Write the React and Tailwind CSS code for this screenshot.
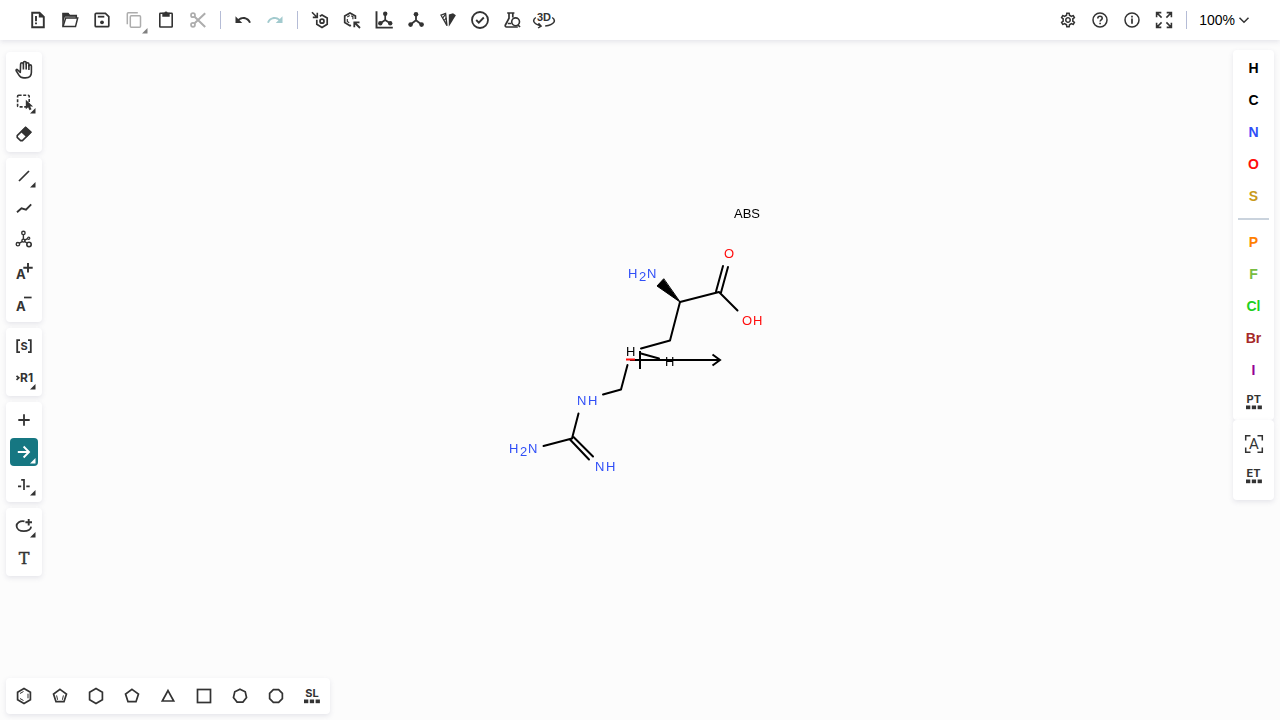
import React from "react";
import { MdOutlineSettings, MdUndo, MdRedo } from "react-icons/md";

function Icon({ children, className = "" }) {
  return (
    <svg
      viewBox="0 0 24 24"
      className={`size-6 ${className}`}
      fill="none"
      stroke="currentColor"
      strokeWidth="1.7"
      aria-hidden="true"
    >
      {children}
    </svg>
  );
}

function Glyph({ x, y, size = 14, font = "Inter, sans-serif", weight = 700, children }) {
  return (
    <text x={x} y={y} fontSize={size} fontFamily={font} fontWeight={weight} fill="currentColor" stroke="none">
      {children}
    </text>
  );
}

function Corner({ className = "" }) {
  return (
    <svg viewBox="0 0 6 6" className={`absolute right-0.5 bottom-0.5 size-1.5 ${className}`} aria-hidden="true">
      <path d="M5.500 0V5.500H0Z" fill="currentColor" />
    </svg>
  );
}

function ToolButton({ label, menu, active, wide, disabled, tone = "text-[#333333]", children }) {
  return (
    <button
      type="button"
      aria-label={label}
      title={label}
      disabled={disabled}
      className={`relative flex shrink-0 items-center justify-center rounded ${wide ? "size-8" : "size-7"} ${
        active ? "bg-[#167782] text-white" : tone
      }`}
    >
      {children}
      {menu && <Corner className={disabled ? "text-[#808080]" : ""} />}
    </button>
  );
}

function Divider() {
  return <div className="mx-1.5 h-[18px] w-px bg-[#b5bcd6]" />;
}

function Panel({ className = "", children }) {
  return (
    <div className={`flex rounded bg-white p-1 shadow-[0_2px_5px_rgba(103,104,132,0.15)] ${className}`}>{children}</div>
  );
}

function polygon(n, r, cx = 12, cy = 12, start = -90) {
  return Array.from({ length: n }, (_, i) => {
    const a = ((start + (360 / n) * i) * Math.PI) / 180;
    return `${(cx + r * Math.cos(a)).toFixed(2)},${(cy + r * Math.sin(a)).toFixed(2)}`;
  }).join(" ");
}

function Squares() {
  return (
    <g fill="currentColor" stroke="none">
      <rect x="4" y="15.500" width="4.300" height="3.700" />
      <rect x="9.800" y="15.500" width="4.300" height="3.700" />
      <rect x="15.600" y="15.500" width="4.300" height="3.700" />
    </g>
  );
}

function TopBar() {
  return (
    <header className="relative z-10 flex h-10 items-center bg-white pr-7 pl-[22px] shadow-[0_2px_5px_rgba(103,104,132,0.15)]">
      <ToolButton wide label="Clear Canvas">
        <Icon>
          <path d="M6.2 4.7h7.3l4.3 4.3v10.3H6.2z" strokeWidth="1.9" />
          <path d="M12.8 4.4v5.2h5.2z" fill="currentColor" stroke="none" />
          <path d="M10 8v5.2M10 14.4v1.8" strokeWidth="1.9" />
        </Icon>
      </ToolButton>
      <ToolButton wide label="Open">
        <Icon>
          <path d="M5 18.5V5.5h5l1.5 2h6.8v2.5" strokeWidth="1.5" />
          <path d="M5 18.6 7.7 10h12l-2.2 8.6z" strokeWidth="1.5" />
          <path d="M4.6 5h5.6l1.500 2h7v1.800H7L5 14.500z" fill="currentColor" stroke="none" />
        </Icon>
      </ToolButton>
      <ToolButton wide label="Save As">
        <Icon>
          <path d="M6.2 5.3h9.2l3.4 3.4v9c0 .6-.4 1-1 1H6.2c-.6 0-1-.4-1-1V6.3c0-.6.4-1 1-1z" strokeWidth="1.7" />
          <path d="M7.8 8.7h6.5" strokeWidth="1.8" />
          <circle cx="12" cy="14.3" r="1.9" fill="currentColor" stroke="none" />
        </Icon>
      </ToolButton>
      <ToolButton wide label="Copy" menu disabled tone="text-[#adadad]">
        <Icon>
          <rect x="8.3" y="7.8" width="10.2" height="11.5" rx="1" strokeWidth="1.5" />
          <path d="M5.3 16.3V5.7c0-.6.4-1 1-1h9.5" strokeWidth="1.5" />
        </Icon>
      </ToolButton>
      <ToolButton wide label="Paste">
        <Icon>
          <rect x="5.8" y="5.3" width="12.4" height="13.7" rx="0.6" strokeWidth="1.6" />
          <path d="M8.3 4.8h2a1.8 1.8 0 0 1 3.4 0h2v4H8.3z" fill="currentColor" stroke="none" />
        </Icon>
      </ToolButton>
      <ToolButton wide label="Cut" disabled tone="text-[#adadad]">
        <Icon>
          <circle cx="7" cy="7.2" r="2" />
          <circle cx="7" cy="16.8" r="2" />
          <path d="M8.6 8.7 19.2 19M8.6 15.3 19.2 5.2" strokeWidth="2" />
        </Icon>
      </ToolButton>
      <Divider />
      <ToolButton wide label="Undo">
        <MdUndo className="size-[18px]" />
      </ToolButton>
      <ToolButton wide label="Redo" disabled tone="text-[#a2cace]">
        <MdRedo className="size-[18px]" />
      </ToolButton>
      <Divider />
      <ToolButton wide label="Aromatize">
        <Icon>
          <path d="M4 4.200l5 5M9.300 4.800v4.600H4.800" strokeWidth="1.600" />
          <path d="M11.800 8.200l2.200-1.300 5.200 3.100v6.300L14 19.400l-5.200-3.100v-4.600" strokeWidth="1.700" />
          <circle cx="14" cy="13.200" r="2" />
        </Icon>
      </ToolButton>
      <ToolButton wide label="Dearomatize">
        <Icon>
          <path d="M11 17.200l-1 .5-5.300-3.200V8.100L10 4.900l5.400 3.200v3" strokeWidth="1.700" />
          <path d="M9.700 7.500 7.300 8.900M7.300 11v2.500l1.900 1.200M11.200 7.700l1.700 1v2.500" strokeWidth="1.200" />
          <path d="M20 20l-5.500-5.500M14.300 19.200v-4.900h5.200" strokeWidth="1.800" />
        </Icon>
      </ToolButton>
      <ToolButton wide label="Layout">
        <Icon>
          <path d="M4.500 3.300v16.300h16.300" strokeWidth="1.900" />
          <path d="M13.200 6.300V12l-4.800 3.300M13.200 12l4.800 3.300" />
          <g fill="currentColor" stroke="none">
            <circle cx="13.200" cy="5.700" r="2.200" />
            <circle cx="8.300" cy="15.300" r="2.200" />
            <circle cx="18.200" cy="15.300" r="2.200" />
          </g>
        </Icon>
      </ToolButton>
      <ToolButton wide label="Clean Up">
        <Icon>
          <path d="M12 6.300v6l-5.500 4.200M12 12.300l5.500 4.200" strokeWidth="1.800" />
          <g fill="currentColor" stroke="none">
            <circle cx="12" cy="6.200" r="2.300" />
            <circle cx="6.600" cy="16.600" r="2.300" />
            <circle cx="17.600" cy="16.600" r="2.300" />
          </g>
        </Icon>
      </ToolButton>
      <ToolButton wide label="Calculate CIP">
        <Icon>
          <path d="M12.800 18.800V6.400l4.200-1.200 2.900 2z" fill="currentColor" stroke="none" />
          <path d="M11 17.800 5 7.200l4.600-1.700z" strokeWidth="1.300" />
          <path d="M6.800 9.800 9.800 5.800M8.300 12.300l2-2.500M9.500 14.500l1-1.300" strokeWidth="1.200" />
        </Icon>
      </ToolButton>
      <ToolButton wide label="Check Structure">
        <Icon>
          <circle cx="12" cy="12" r="8" strokeWidth="1.800" />
          <path d="m8.200 12 2.600 2.600 5-5.100" strokeWidth="1.900" />
        </Icon>
      </ToolButton>
      <ToolButton wide label="Calculated Values">
        <Icon>
          <path d="M7.200 5h7.200M9 5v5.200L5.400 17c-.5 1 .1 2 1.200 2h11.200M12.800 5v4.500M7.800 15.500h3.500" strokeWidth="1.700" />
          <circle cx="15.600" cy="13.800" r="3.900" strokeWidth="1.600" />
          <path d="m18 17 2 2" />
        </Icon>
      </ToolButton>
      <ToolButton wide label="3D Viewer">
        <Icon>
          <Glyph x="5" y="12.700" size={11} font="Liberation Sans, sans-serif">3D</Glyph>
          <path d="M3.800 9.500C.3 12 .7 15.600 8.500 17.800M6.500 15.200l2.600 2.800-3 2M20.200 9.500c4.100 3 2.500 7-7 8.600" strokeWidth="1.500" />
        </Icon>
      </ToolButton>

      <div className="ml-auto flex items-center">
        <ToolButton wide label="Settings">
          <MdOutlineSettings className="size-[18px]" />
        </ToolButton>
        <ToolButton wide label="Help">
          <Icon>
            <circle cx="12" cy="12" r="7" strokeWidth="1.500" />
            <path d="M9.800 10.400c0-2.900 4.400-2.800 4.400-.2 0 1.600-2.100 1.700-2.100 3.400M12.100 14.700v1.500" strokeWidth="1.600" />
          </Icon>
        </ToolButton>
        <ToolButton wide label="About">
          <Icon>
            <circle cx="12" cy="12" r="7" strokeWidth="1.500" />
            <path d="M12 10.500v5.300M12 7.800v1.600" strokeWidth="1.700" />
          </Icon>
        </ToolButton>
        <ToolButton wide label="Fullscreen mode">
          <Icon>
            <path
              d="M9.600 9.600 4.800 4.800M9.300 4.600H4.600v4.700M14.400 9.600l4.800-4.800M14.700 4.600h4.700v4.700M9.600 14.400l-4.800 4.800M9.300 19.400H4.600v-4.700M14.400 14.400l4.800 4.800M14.700 19.400h4.700v-4.700"
              strokeWidth="1.600"
            />
          </Icon>
        </ToolButton>
        <Divider />
        <button type="button" aria-label="Zoom 100%" className="ml-1.5 flex h-8 items-center gap-px text-sm text-black">
          100%
          <svg viewBox="0 0 16 16" className="size-4 text-[#333333]" aria-hidden="true">
            <path d="m3.500 5.800 4.500 4.500 4.500-4.500" fill="none" stroke="currentColor" strokeWidth="1.500" />
          </svg>
        </button>
      </div>
    </header>
  );
}

function LeftBar() {
  return (
    <nav aria-label="Drawing tools" className="relative flex w-9 flex-col gap-1.5">
      <Panel className="flex-col gap-1">
        <ToolButton label="Hand tool">
          <Icon>
            <path
              d="M8.300 14.500 5.500 11.700c-.8-.8-1.800.2-1.300 1.100l2.900 4.600c1 1.600 2.500 2.500 4.800 2.500h1.600c3.600 0 5.900-2.300 5.900-5.700V8c0-1.500-2.500-1.500-2.500 0V6c0-1.600-2.700-1.600-2.700 0V4.700c0-1.600-2.800-1.600-2.800 0V6c0-1.600-2.800-1.600-2.800 0z"
              strokeWidth="1.600"
              strokeLinejoin="round"
            />
            <path d="M11.400 5.500v6M14.200 5.500v6M16.900 7v5" strokeWidth="1.600" />
          </Icon>
        </ToolButton>
        <ToolButton label="Rectangle Selection" menu>
          <Icon>
            <rect x="5.600" y="5.300" width="11.600" height="11.600" rx="1" strokeDasharray="3 1.6" strokeWidth="1.600" />
            <path d="M13.800 9.800v9.400l2.300-1.900 1.400 3 2.100-1-1.500-2.900h3z" fill="currentColor" stroke="none" />
          </Icon>
        </ToolButton>
        <ToolButton label="Erase">
          <Icon>
            <path d="M13.600 5.400 18.900 10.200 10.400 18.600H8.600L5.200 15.400V13.600z" strokeWidth="1.600" strokeLinejoin="round" />
            <path d="M13.600 4.600 19.700 10.200 14.600 15.400 8.600 9.700z" fill="currentColor" stroke="none" />
          </Icon>
        </ToolButton>
      </Panel>
      <Panel className="flex-col gap-1">
        <ToolButton label="Single Bond" menu>
          <Icon>
            <path d="M7 17 17 7" />
          </Icon>
        </ToolButton>
        <ToolButton label="Chain">
          <Icon>
            <path d="M5 16.200 9.500 12.300l4.500 1.300 5.200-5.200" strokeWidth="1.900" />
          </Icon>
        </ToolButton>
        <ToolButton label="Stereochemistry">
          <Icon>
            <circle cx="11.400" cy="4.900" r="1.700" strokeWidth="1.400" />
            <circle cx="5.900" cy="16.200" r="1.700" strokeWidth="1.400" />
            <circle cx="17" cy="16.500" r="2.200" strokeWidth="1.600" />
            <circle cx="16.700" cy="10.200" r="1.100" strokeWidth="1.200" />
            <circle cx="11.400" cy="12.600" r="1.500" strokeWidth="1.400" />
            <path d="M11.400 6.600v4.600M10 13.600l-2.800 1.700M12.800 13.700l2.200 1.300M12.900 12l2.700-1.300" strokeWidth="1.400" />
          </Icon>
        </ToolButton>
        <ToolButton label="Charge Plus">
          <Icon>
            <Glyph x="4" y="19" size={13}>A</Glyph>
            <path d="M16 3v9.400M11.300 7.700h9.400" strokeWidth="1.900" />
          </Icon>
        </ToolButton>
        <ToolButton label="Charge Minus">
          <Icon>
            <Glyph x="4" y="19" size={13}>A</Glyph>
            <path d="M12 5.500h7.600" strokeWidth="1.700" />
          </Icon>
        </ToolButton>
      </Panel>
      <Panel className="flex-col gap-1">
        <ToolButton label="S-Group">
          <Icon>
            <path d="M8 6.200H5.200v12H8M16 6.200h2.800v12H16" strokeWidth="1.800" />
            <Glyph x="8.400" y="16" size={11}>S</Glyph>
          </Icon>
        </ToolButton>
        <ToolButton label="R-Group Label Tool" menu>
          <Icon>
            <path d="m4.500 9.800 2.300 2-2.300 2" strokeWidth="1.700" />
            <Glyph x="8" y="16" size={12}>R1</Glyph>
          </Icon>
        </ToolButton>
      </Panel>
      <Panel className="flex-col gap-1">
        <ToolButton label="Reaction Plus Tool">
          <Icon>
            <path d="M12 6.300v11.400M6.300 12h11.400" strokeWidth="1.800" />
          </Icon>
        </ToolButton>
        <ToolButton label="Arrow Tool" menu active>
          <Icon>
            <path d="M5.800 12h11M11.600 6.500 17 12l-5.400 5.500" strokeWidth="1.900" />
          </Icon>
        </ToolButton>
        <ToolButton label="Reaction Mapping Tool" menu>
          <Icon>
            <path d="M6 14.300h3.200M14.300 14.300h3.400M9.200 7.800h2.800v10.200" strokeWidth="1.700" />
          </Icon>
        </ToolButton>
      </Panel>
      <Panel className="flex-col gap-1">
        <ToolButton label="Shape" menu>
          <Icon>
            <path d="M12.500 7.300C7.800 6.500 4.600 9 4.600 12.100c0 3 3.100 5.100 7.200 5.100 4 0 7.100-1.800 7.300-4.600" strokeWidth="1.800" />
            <path d="M16.700 5v6.600M13.400 8.300h6.600" strokeWidth="1.900" />
          </Icon>
        </ToolButton>
        <ToolButton label="Add text">
          <svg viewBox="0 0 24 24" className="size-6" aria-hidden="true">
            <text
              x="12"
              y="18"
              textAnchor="middle"
              fontSize="16"
              fontFamily="DejaVu Serif, serif"
              fill="currentColor"
              stroke="currentColor"
              strokeWidth="0.4"
            >
              T
            </text>
          </svg>
        </ToolButton>
      </Panel>
    </nav>
  );
}

const mainAtoms = [
  ["H", "text-black"],
  ["C", "text-black"],
  ["N", "text-[#304ff7]"],
  ["O", "text-[#ff0d0d]"],
  ["S", "text-[#c99a19]"],
];
const moreAtoms = [
  ["P", "text-[#ff8000]"],
  ["F", "text-[#78bc42]"],
  ["Cl", "text-[#1fd01f]"],
  ["Br", "text-[#a62929]"],
  ["I", "text-[#940094]"],
];

function Atom({ symbol, tone }) {
  return (
    <button type="button" className={`flex size-7 items-center justify-center text-sm font-bold ${tone}`}>
      {symbol}
    </button>
  );
}

function RightBar() {
  return (
    <nav aria-label="Atoms" className="relative -mt-0.5 flex w-[41px] flex-col">
      <Panel className="flex-col items-center gap-1">
        {mainAtoms.map(([s, c]) => (
          <Atom key={s} symbol={s} tone={c} />
        ))}
        <div className="my-1 h-0.5 w-[31px] bg-[#cad3dd]" />
        {moreAtoms.map(([s, c]) => (
          <Atom key={s} symbol={s} tone={c} />
        ))}
        <ToolButton label="Periodic Table">
          <Icon>
            <Glyph x="4.500" y="13.300" size={11}>PT</Glyph>
            <Squares />
          </Icon>
        </ToolButton>
      </Panel>
      <Panel className="flex-col items-center gap-1 py-2.5">
        <ToolButton label="Any atom">
          <Icon>
            <path d="M8.500 3.700H3.700v4.800M15.500 3.700h4.800v4.800M8.500 20.300H3.700v-4.800M15.500 20.300h4.800v-4.800" strokeWidth="1.500" />
            <Glyph x="7" y="17.400" size={15} font="Roboto, sans-serif" weight={400}>A</Glyph>
          </Icon>
        </ToolButton>
        <ToolButton label="Extended Table">
          <Icon>
            <Glyph x="4.500" y="13.300" size={11}>ET</Glyph>
            <Squares />
          </Icon>
        </ToolButton>
      </Panel>
    </nav>
  );
}

function BottomBar() {
  return (
    <div className="relative flex px-1.5 pb-1.5">
      <Panel className="gap-2">
        <ToolButton label="Benzene">
          <Icon>
            <polygon points={polygon(6, 7.4)} />
            <path d="M11.500 7.500 8 9.500M8 14.500l3.500 2M16 9.700v4.600" strokeWidth="1" />
          </Icon>
        </ToolButton>
        <ToolButton label="Cyclopentadiene">
          <Icon>
            <polygon points={polygon(5, 6.8, 12, 12.2)} />
            <path d="m8.600 11.400 1 4.400M15.400 11.400l-1 4.400" strokeWidth="1" />
          </Icon>
        </ToolButton>
        <ToolButton label="Cyclohexane">
          <Icon>
            <polygon points={polygon(6, 7.4)} />
          </Icon>
        </ToolButton>
        <ToolButton label="Cyclopentane">
          <Icon>
            <polygon points={polygon(5, 6.8, 12, 12.2)} />
          </Icon>
        </ToolButton>
        <ToolButton label="Cyclopropane">
          <Icon>
            <path d="M12 6.600 17.700 17H6.300z" />
          </Icon>
        </ToolButton>
        <ToolButton label="Cyclobutane">
          <Icon>
            <rect x="5.500" y="5.500" width="13" height="13" />
          </Icon>
        </ToolButton>
        <ToolButton label="Cycloheptane">
          <Icon>
            <polygon points={polygon(7, 6.7)} />
          </Icon>
        </ToolButton>
        <ToolButton label="Cyclooctane">
          <Icon>
            <polygon points={polygon(8, 6.9, 12, 12, 22.5)} />
          </Icon>
        </ToolButton>
        <ToolButton label="Structure Library">
          <Icon>
            <Glyph x="5.200" y="12.800" size={11}>SL</Glyph>
            <Squares />
          </Icon>
        </ToolButton>
      </Panel>
    </div>
  );
}

function Molecule() {
  return (
    <svg
      viewBox="500 200 280 320"
      className="h-80 w-[280px] will-change-transform"
      fill="none"
      stroke="black"
      strokeWidth="2"
      strokeLinecap="round"
      strokeLinejoin="round"
      role="img"
      aria-label="Arginine structure"
    >
      <path d="M680 302 719 292 737.500 310.500M716 291.500 723 266M721 292.500 728 267" />
      <path d="M680 302 670 340.500 641 348.500M641 353.500 659 358.500" />
      <path d="M680 302 657 286 663.500 279Z" fill="black" strokeWidth="1" />
      <path d="M627.500 365 621 389.500 603 394.500M578.500 413.500 572 438.500 543.500 446M573.500 437 593 456.500M570 439.500 589 459.500" />
      <path d="M630 360H720M640 351V369M712.500 354.500 720 360 712.500 365.500" strokeLinecap="butt" strokeLinejoin="miter" />
      <path d="M626 359.500H635" stroke="#ff0d0d" strokeLinecap="butt" />
      <g stroke="none" fontSize="13" fontFamily="Liberation Sans, Arial, sans-serif">
        <g fill="black">
          <text x="734" y="218">ABS</text>
          <text x="626" y="356">H</text>
          <text x="665" y="366">H</text>
        </g>
        <g fill="#ff0d0d">
          <text x="724" y="258">O</text>
          <text x="742" y="325">O</text>
          <text x="753" y="325">H</text>
        </g>
        <g fill="#304ff7">
          <text x="628" y="278">H</text>
          <text x="639" y="281">2</text>
          <text x="647" y="278">N</text>
          <text x="577" y="405">N</text>
          <text x="588" y="405">H</text>
          <text x="509" y="453">H</text>
          <text x="520" y="456">2</text>
          <text x="528" y="453">N</text>
          <text x="595" y="471">N</text>
          <text x="606" y="471">H</text>
        </g>
      </g>
    </svg>
  );
}

export default function App() {
  return (
    <div className="relative flex min-h-screen flex-col bg-[#fcfcfc] font-['Liberation_Sans',Arial,sans-serif] antialiased">
      <main className="absolute inset-0 flex items-center justify-center">
        <Molecule />
      </main>
      <TopBar />
      <div className="flex flex-1 items-start justify-between px-1.5 pt-3">
        <LeftBar />
        <RightBar />
      </div>
      <BottomBar />
    </div>
  );
}
